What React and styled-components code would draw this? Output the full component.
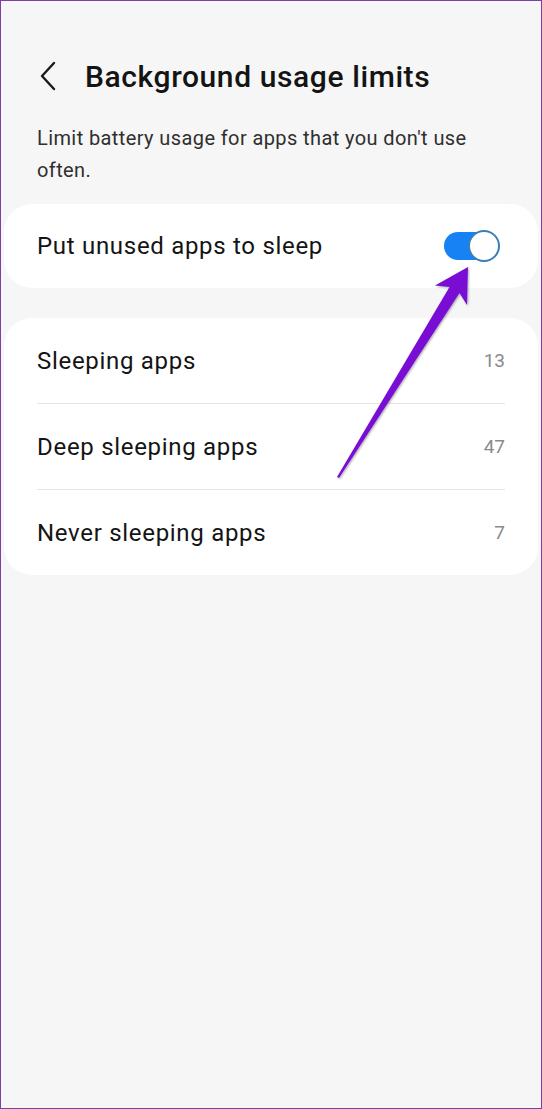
import React from "react";
import styled, { createGlobalStyle } from "styled-components";

const Global = createGlobalStyle`
  html, body { margin: 0; padding: 0; background: #f6f6f6; }
  body { font-family: Roboto, "Noto Sans", sans-serif; -webkit-font-smoothing: antialiased; }
`;

const Screen = styled.div`
  position: relative;
  box-sizing: border-box;
  width: 542px;
  height: 1109px;
  border: 1px solid #7d3fa6;
  background: #f6f6f6;
  overflow: hidden;
`;

const Header = styled.header`
  display: flex;
  align-items: center;
  gap: 25px;
  padding: 57px 0 0 35px;
  height: 36px;
`;

const BackButton = styled.button`
  display: flex;
  align-items: center;
  justify-content: center;
  width: 24px;
  height: 36px;
  padding: 0;
  border: 0;
  background: none;
`;

const Title = styled.h1`
  margin: 0;
  font-size: 30px;
  font-weight: 500;
  color: #141414;
  letter-spacing: 0.6px;
`;

const Description = styled.p`
  margin: 28px 36px 0 36px;
  font-size: 20px;
  line-height: 32px;
  letter-spacing: 0.4px;
  color: #2f2f2f;
`;

const Card = styled.section`
  margin: ${p => p.$top}px 3px 0 3px;
  background: #ffffff;
  border-radius: 28px;
  padding: 0 33px;
`;

const Row = styled.div`
  display: flex;
  align-items: center;
  justify-content: space-between;
  height: ${p => p.$h}px;
  border-top: ${p => (p.$divider ? "1px solid #e4e4e4" : "none")};
`;

const Label = styled.span`
  font-size: 24px;
  letter-spacing: 0.7px;
  color: #141414;
`;

const Count = styled.span`
  font-size: 19px;
  color: #8a8a8a;
`;

const Track = styled.div`
  position: relative;
  width: 54px;
  height: 28px;
  border-radius: 14px;
  background: #1682f4;
  margin-right: 7px;
`;

const Thumb = styled.div`
  position: absolute;
  right: -2px;
  top: -2px;
  box-sizing: border-box;
  width: 32px;
  height: 32px;
  border-radius: 50%;
  background: #ffffff;
  border: 2px solid #3c7fb8;
`;

const Annotation = styled.svg`
  position: absolute;
  left: 0;
  top: 0;
  pointer-events: none;
`;

export default function App() {
  const items = [
    { label: "Sleeping apps", count: 13 },
    { label: "Deep sleeping apps", count: 47 },
    { label: "Never sleeping apps", count: 7 },
  ];
  return (
    <>
      <Global />
      <Screen>
        <Header>
          <BackButton aria-label="Back">
            <svg width="18" height="30" viewBox="0 0 18 30">
              <path d="M15 2 L3 15 L15 28" fill="none" stroke="#1a1a1a" strokeWidth="2.4" strokeLinecap="round" strokeLinejoin="round" />
            </svg>
          </BackButton>
          <Title>Background usage limits</Title>
        </Header>
        <Description>Limit battery usage for apps that you don't use often.</Description>
        <Card $top={18}>
          <Row $h={84}>
            <Label>Put unused apps to sleep</Label>
            <Track>
              <Thumb />
            </Track>
          </Row>
        </Card>
        <Card $top={30}>
          {items.map((it, i) => (
            <Row key={it.label} $h={85} $divider={i > 0}>
              <Label>{it.label}</Label>
              <Count>{it.count}</Count>
            </Row>
          ))}
        </Card>
        <Annotation width="542" height="1109" viewBox="0 0 542 1109">
          <defs>
            <filter id="sh" x="-20%" y="-20%" width="140%" height="140%">
              <feDropShadow dx="1" dy="1" stdDeviation="1.2" floodColor="#000" floodOpacity="0.35" />
            </filter>
          </defs>
          <polygon
            points="467,266 466,304 458.5,292 338,477 336,476 448.5,286 434,284.5"
            fill="#7a10d4"
            filter="url(#sh)"
          />
        </Annotation>
      </Screen>
    </>
  );
}
